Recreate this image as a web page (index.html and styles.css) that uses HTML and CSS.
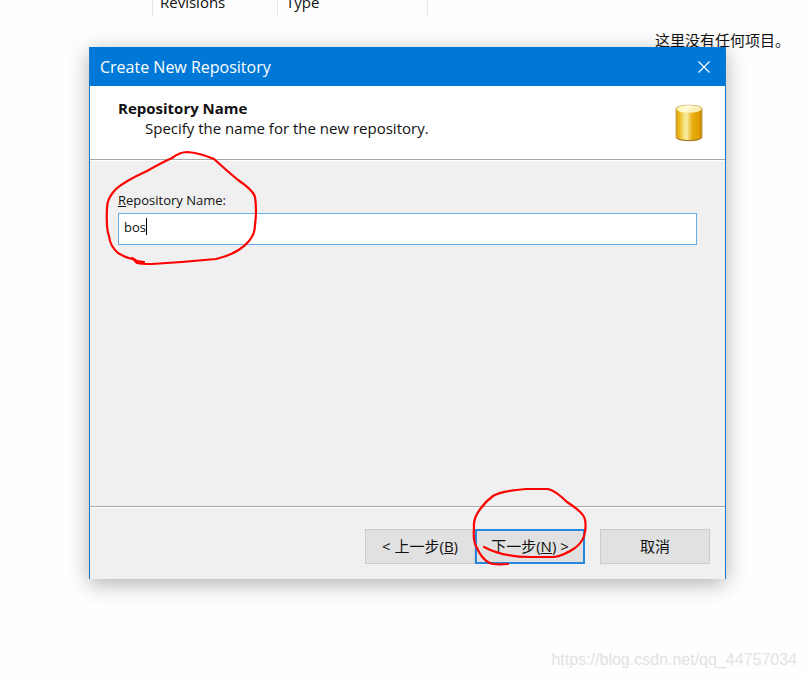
FILE: index.html
```html
<!DOCTYPE html>
<html lang="zh-CN">
<head>
  <meta charset="UTF-8">
  <title>Create New Repository</title>
  <link rel="stylesheet" href="styles.css">
</head>
<body>
  <main class="list">
    <div class="columns">
      <span class="col name"></span>
      <span class="col revisions">Revisions</span>
      <span class="col type">Type</span>
    </div>
    <p class="empty">这里没有任何项目。</p>
  </main>

  <form class="dialog" role="dialog" aria-labelledby="dialog-title">
    <div class="titlebar">
      <span id="dialog-title">Create New Repository</span>
      <button type="button" class="close" aria-label="Close">
        <svg width="12" height="12" viewBox="0 0 12 12"><path d="M0.5 0.5L11.5 11.5M11.5 0.5L0.5 11.5" stroke="#fff" stroke-width="1.2"/></svg>
      </button>
    </div>
    <header class="banner">
      <div>
        <h1>Repository Name</h1>
        <p>Specify the name for the new repository.</p>
      </div>
      <svg class="cylinder" width="28" height="38" viewBox="0 0 28 38">
        <defs>
          <linearGradient id="gold">
            <stop offset="0" stop-color="#d99a0c"/>
            <stop offset="0.14" stop-color="#efb91f"/>
            <stop offset="0.3" stop-color="#f5e07c"/>
            <stop offset="0.42" stop-color="#f7eda2"/>
            <stop offset="0.54" stop-color="#efc545"/>
            <stop offset="0.66" stop-color="#e6a90a"/>
            <stop offset="0.88" stop-color="#e3a000"/>
            <stop offset="1" stop-color="#b87b05"/>
          </linearGradient>
          <linearGradient id="lid" x2="1" y2="0.3">
            <stop offset="0" stop-color="#f8eda0"/>
            <stop offset="0.5" stop-color="#fffbd6"/>
            <stop offset="1" stop-color="#f6e9a0"/>
          </linearGradient>
        </defs>
        <path d="M1 5C1 0 27 0 27 5V33C27 38 1 38 1 33Z" fill="url(#gold)" stroke="#c9a04f" stroke-width="1"/>
        <path d="M1.500 33.500C4 37.500 24 37.500 26.500 33.500" fill="none" stroke="#a87725" stroke-width="1"/>
        <ellipse cx="14" cy="5" rx="12.500" ry="3.800" fill="url(#lid)"/>
      </svg>
    </header>

    <div class="content">
      <label for="repo-name"><u>R</u>epository Name:</label>
      <div class="field">
        <input type="text" id="repo-name" value="bos">
        <span class="caret"></span>
      </div>
      <svg class="mark mark-name" width="160" height="122" viewBox="102 147 160 122">
        <path d="M144 262L137 261L132 258L137 263Q141 264 152 264Q185 262 216 259Q238 254 249 241Q255 234 255 225Q257 210 255 197Q253 190 238 180Q226 170 214 159Q200 153 187 152Q180 152 172 158Q161 163 147 171Q125 181 116 189Q107 198 107 208Q106 229 109 236Q110 246 118 253Q124 257 132 259"/>
      </svg>
    </div>

    <footer class="actions">
      <button type="button">&lt; 上一步(<u>B</u>)</button>
      <div class="next">
        <button type="submit" class="default">下一步(<u>N</u>) &gt;</button>
        <svg class="mark mark-next" width="120" height="86" viewBox="469 483 120 86">
          <path d="M484 547Q503 557 530 557H554Q563 556 575 548Q584 541 585 532Q587 519 582 514Q579 510 567 502Q556 491 548 489H526Q501 491 493 496Q486 501 481 508Q473 518 474 527Q473 541 476 546Q482 560 490 563Q494 565 508 564"/>
        </svg>
      </div>
      <button type="button" class="cancel">取消</button>
    </footer>
  </form>

  <div class="watermark">https://blog.csdn.net/qq_44757034</div>
  <script>
    document.querySelector(".dialog").addEventListener("submit", function(e) {
      e.preventDefault();
    });
  </script>
</body>
</html>
```

FILE: styles.css
```css
* {
  box-sizing: border-box;
}
html, body {
  margin: 0;
  height: 100%;
}
body {
  position: relative;
  overflow: hidden;
  background: #fefefe;
  color: #111;
  font-family: "Open Sans", "Noto Sans CJK SC", sans-serif;
  font-size: 15px;
}
p, h1 {
  margin: 0;
}

/* list behind the dialog */
.columns {
  display: flex;
  height: 17px;
  overflow: hidden;
}
.col {
  display: flex;
  align-items: flex-end;
  padding-left: 7px;
  border-right: 1px solid #e8e8e8;
  line-height: 28px;
  padding-bottom: 1px;
}
.name {
  width: 153px;
}
.revisions {
  width: 125px;
}
.type {
  width: 150px;
  padding-left: 8px;
}
.empty {
  padding: 11px 16px 0 0;
  line-height: 24px;
  text-align: right;
}

/* dialog window */
.dialog {
  position: absolute;
  top: 47px;
  left: 89px;
  right: 80px;
  border: solid #1979c9;
  border-width: 0 1px;
  background: #f0f0f0;
  box-shadow: 0 5px 20px rgba(0, 0, 0, .3);
}
.titlebar {
  display: flex;
  justify-content: space-between;
  align-items: center;
  height: 39px;
  padding: 0 15px 0 10px;
  background: #0078d7;
  color: #fff;
  font-size: 16px;
}
.close {
  display: flex;
  padding: 0;
  border: 0;
  background: none;
}
.banner {
  display: flex;
  justify-content: space-between;
  align-items: flex-start;
  height: 74px;
  padding: 12px 22px 0 28px;
  border-bottom: 1px solid #a8a8a8;
  background: #fff;
  line-height: 20px;
}
.banner h1 {
  font-size: 15px;
}
.banner p {
  padding-left: 27px;
}
.cylinder {
  margin-top: 6px;
}
.content {
  position: relative;
  min-height: 347px;
  padding: 29px 28px;
  border-top: 1px solid #fff;
  border-bottom: 1px solid #a8a8a8;
}
.content label {
  display: block;
  margin-bottom: 3px;
  font-size: 13px;
  line-height: 20px;
}
.field {
  position: relative;
}
.field input {
  display: block;
  width: 100%;
  height: 32px;
  padding: 0 5px 5px;
  border: 1px solid #66aee7;
  outline: none;
  background: #fff;
  color: #111;
  font: inherit;
  font-size: 13px;
}
.caret {
  position: absolute;
  top: 5px;
  left: 28px;
  width: 1px;
  height: 17px;
  background: #000;
}
.actions {
  display: flex;
  justify-content: flex-end;
  padding: 21px 15px 15px;
  border-top: 1px solid #fff;
}
.actions button {
  width: 110px;
  height: 35px;
  padding: 0 0 2px;
  border: 1px solid #ccc;
  background: #e1e1e1;
  color: #111;
  font: inherit;
}
.actions .default {
  border: 2px solid #2687dc;
}
.actions .cancel {
  margin-left: 15px;
}
.next {
  position: relative;
}

/* red pen marks */
.mark {
  position: absolute;
  pointer-events: none;
  fill: none;
  stroke: #f00;
  stroke-width: 2.2;
  stroke-linejoin: round;
  stroke-linecap: round;
}
.mark-name {
  top: -14px;
  left: 12px;
}
.mark-next {
  top: -46px;
  left: -6px;
}

.watermark {
  position: absolute;
  right: 9px;
  bottom: 8px;
  color: #e2e2e2;
  font-family: "Liberation Sans", Arial, sans-serif;
  font-size: 16px;
  line-height: 20px;
}
```
